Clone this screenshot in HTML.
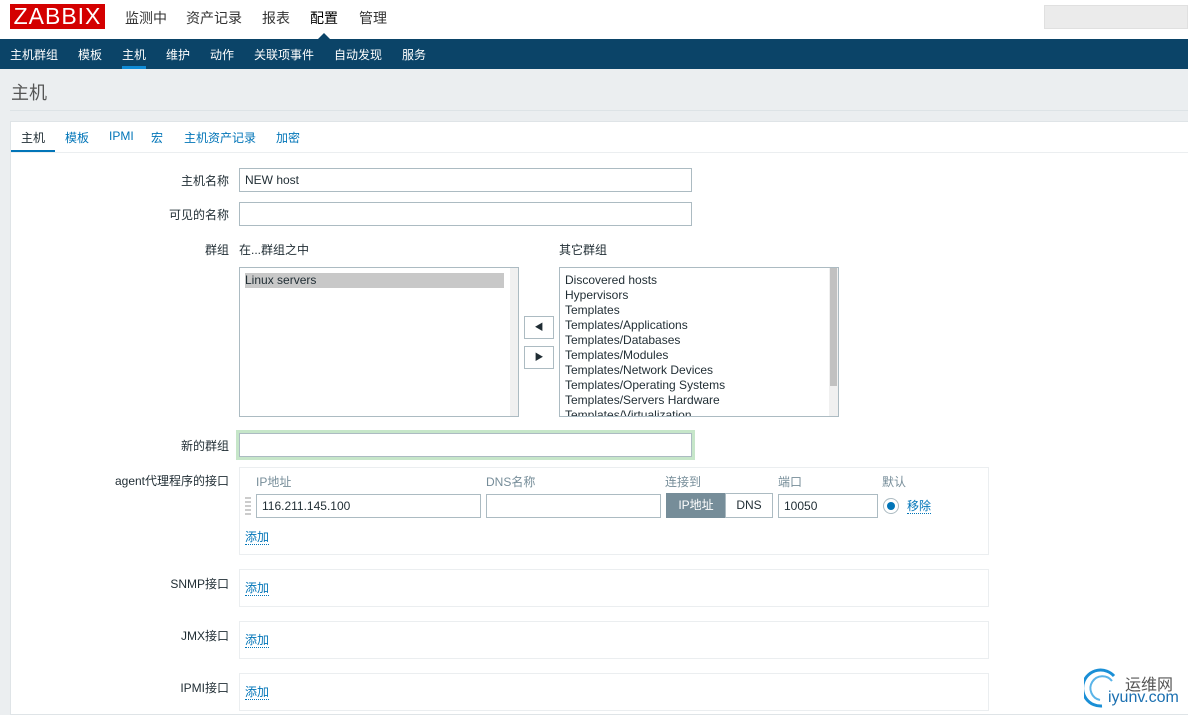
<!DOCTYPE html>
<html><head><meta charset="utf-8"><style>
*{box-sizing:border-box;margin:0;padding:0}
body{width:1188px;height:715px;overflow:hidden;background:#fff;font-family:"Liberation Sans","Noto Sans CJK SC",sans-serif;font-size:12px;color:#1f2c33;position:relative}
.a{position:absolute}
.top{left:0;top:0;width:1188px;height:39px;background:#fff}
.logo{left:10px;top:4px;width:95px;height:25px;background:#d40000;color:#fff;font-size:23px;line-height:25px;text-align:center;letter-spacing:1px}
.mm{top:8px;font-size:14px;color:#333}
.nav{left:0;top:39px;width:1188px;height:30px;background:#0b4468}
.nv{top:46px;color:#fff;font-size:12px}
.hdr{left:0;top:69px;width:1188px;height:646px;background:#ebeef0}
.box{left:10px;top:121px;width:1178px;height:594px;background:#fff;border:1px solid #dfe4e7;border-right:none}
.tab{top:129px;color:#0275b8;font-size:12px}
.lbl{width:229px;left:0;text-align:right;font-size:12px;color:#1f2c33}
.inp{border:1px solid #acbbc2;background:#fff;height:24px;padding-left:5px;line-height:22px;font-size:12px}
.lb{border:1px solid #acbbc2;background:#fff}
.it{position:absolute;left:5px;font-size:12px;line-height:15px}
.btn{border:1px solid #acbbc2;background:#fff;width:30px;height:23px;text-align:center;line-height:21px;font-size:9px}
.grp{border:1px solid #ebeef0;background:#fff}
.lnk{color:#0275b8;border-bottom:1px dotted #0275b8;font-size:12px;line-height:14px}
.gh{color:#768d99;font-size:12px;top:473px}
</style></head><body>
<div class="a top"></div>
<div class="a logo">ZABBIX</div>
<div class="a mm" style="left:125px">监测中</div>
<div class="a mm" style="left:186px">资产记录</div>
<div class="a mm" style="left:262px">报表</div>
<div class="a mm" style="left:310px;color:#000">配置</div>
<div class="a mm" style="left:359px">管理</div>
<div class="a" style="left:318px;top:33px;width:0;height:0;border-left:6px solid transparent;border-right:6px solid transparent;border-bottom:6px solid #0b4468"></div>
<div class="a" style="left:1044px;top:5px;width:144px;height:24px;background:#ebebeb;border:1px solid #e0e0e0"></div>
<div class="a nav"></div>
<div class="a nv" style="left:10px">主机群组</div>
<div class="a nv" style="left:78px">模板</div>
<div class="a nv" style="left:122px">主机</div>
<div class="a" style="left:122px;top:66px;width:24px;height:3px;background:#0f8bd6"></div>
<div class="a nv" style="left:166px">维护</div>
<div class="a nv" style="left:210px">动作</div>
<div class="a nv" style="left:254px">关联项事件</div>
<div class="a nv" style="left:334px">自动发现</div>
<div class="a nv" style="left:402px">服务</div>
<div class="a hdr"></div>
<div class="a" style="left:11px;top:79px;font-size:18px;color:#555">主机</div>
<div class="a" style="left:10px;top:110px;width:1178px;height:1px;background:#dde3e6"></div>
<div class="a box"></div>
<div class="a tab" style="left:21px;color:#1f2c33">主机</div>
<div class="a" style="left:11px;top:150px;width:44px;height:3px;background:#0275b8"></div>
<div class="a tab" style="left:65px">模板</div>
<div class="a tab" style="left:109px">IPMI</div>
<div class="a tab" style="left:151px">宏</div>
<div class="a tab" style="left:184px">主机资产记录</div>
<div class="a tab" style="left:276px">加密</div>
<div class="a" style="left:11px;top:152px;width:1177px;height:1px;background:#ebeef0"></div>

<div class="a lbl" style="top:172px">主机名称</div>
<div class="a inp" style="left:239px;top:168px;width:453px">NEW host</div>
<div class="a lbl" style="top:206px">可见的名称</div>
<div class="a inp" style="left:239px;top:202px;width:453px"></div>
<div class="a lbl" style="top:241px">群组</div>
<div class="a" style="left:239px;top:241px">在...群组之中</div>
<div class="a" style="left:559px;top:241px">其它群组</div>
<div class="a lb" style="left:239px;top:267px;width:280px;height:150px">
<div style="position:absolute;left:5px;top:5px;width:259px;height:15px;background:#c8c8c8"></div>
<div class="it" style="top:5px">Linux servers</div>
<div style="position:absolute;right:0;top:0;width:8px;height:148px;background:#f0f0f0"></div></div>
<div class="a btn" style="left:524px;top:316px">◀</div>
<div class="a btn" style="left:524px;top:346px">▶</div>
<div class="a lb" style="left:559px;top:267px;width:280px;height:150px;overflow:hidden">
<div class="it" style="top:5px">Discovered hosts<br>Hypervisors<br>Templates<br>Templates/Applications<br>Templates/Databases<br>Templates/Modules<br>Templates/Network Devices<br>Templates/Operating Systems<br>Templates/Servers Hardware<br>Templates/Virtualization</div>
<div style="position:absolute;right:0;top:0;width:9px;height:148px;background:#f0f0f0"></div>
<div style="position:absolute;right:1px;top:0;width:7px;height:118px;background:#c1c1c1"></div></div>
<div class="a lbl" style="top:437px">新的群组</div>
<div class="a inp" style="left:239px;top:433px;width:453px;box-shadow:0 0 0 3px #c6e6c9"></div>

<div class="a lbl" style="top:472px">agent代理程序的接口</div>
<div class="a grp" style="left:239px;top:467px;width:750px;height:88px"></div>
<div class="a gh" style="left:256px">IP地址</div>
<div class="a gh" style="left:486px">DNS名称</div>
<div class="a gh" style="left:665px">连接到</div>
<div class="a gh" style="left:778px">端口</div>
<div class="a gh" style="left:882px">默认</div>
<div class="a" style="left:245px;top:497px;width:6px;height:18px;background:repeating-linear-gradient(#ccc 0 2px,transparent 2px 4px);"></div>
<div class="a inp" style="left:256px;top:494px;width:225px">116.211.145.100</div>
<div class="a inp" style="left:486px;top:494px;width:175px"></div>
<div class="a" style="left:666px;top:493px;width:60px;height:25px;background:#768d99;color:#fff;line-height:25px;text-align:center">IP地址</div>
<div class="a" style="left:725px;top:493px;width:48px;height:25px;border:1px solid #acbbc2;line-height:23px;text-align:center">DNS</div>
<div class="a inp" style="left:778px;top:494px;width:100px">10050</div>
<div class="a" style="left:883px;top:498px;width:16px;height:16px;border-radius:50%;border:1px solid #acbbc2;background:#fff"><div style="margin:3px;width:8px;height:8px;border-radius:50%;background:#0275b8"></div></div>
<div class="a lnk" style="left:907px;top:499px">移除</div>
<div class="a lnk" style="left:245px;top:530px">添加</div>

<div class="a lbl" style="top:575px">SNMP接口</div>
<div class="a grp" style="left:239px;top:569px;width:750px;height:38px"></div>
<div class="a lnk" style="left:245px;top:581px">添加</div>
<div class="a lbl" style="top:627px">JMX接口</div>
<div class="a grp" style="left:239px;top:621px;width:750px;height:38px"></div>
<div class="a lnk" style="left:245px;top:633px">添加</div>
<div class="a lbl" style="top:679px">IPMI接口</div>
<div class="a grp" style="left:239px;top:673px;width:750px;height:38px"></div>
<div class="a lnk" style="left:245px;top:685px">添加</div>

<svg class="a" style="left:1084px;top:668px" width="40" height="44"><path d="M30 8 A18 18 0 1 0 18 38" fill="none" stroke="#1a8fd6" stroke-width="3"/><path d="M28 13 A12 12 0 1 0 16 32" fill="none" stroke="#5ab4e8" stroke-width="2"/></svg>
<div class="a" style="left:1125px;top:671px;font-size:16px;color:#555">运维网</div>
<div class="a" style="left:1108px;top:689px;font-size:16px;color:#1a6fb0">iyunv.com</div>
</body></html>
